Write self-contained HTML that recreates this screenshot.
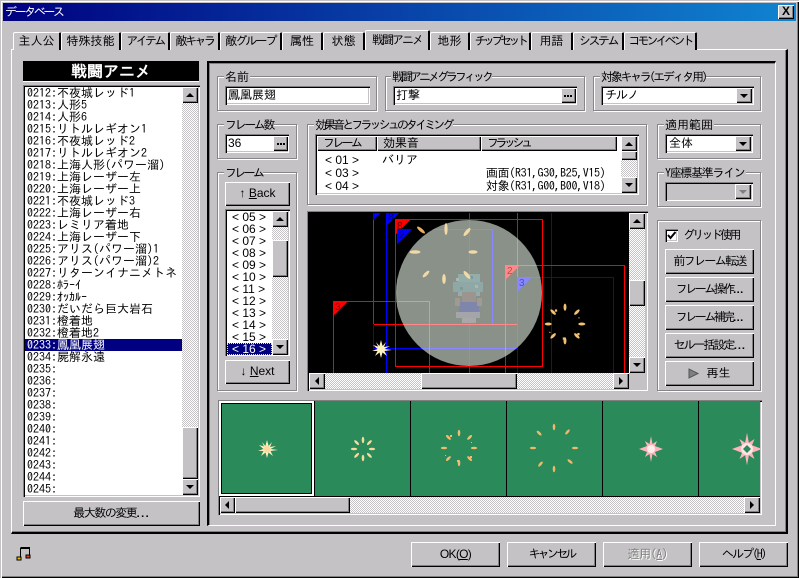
<!DOCTYPE html>
<html lang="ja"><head><meta charset="utf-8"><title>データベース</title>
<style>
html,body{margin:0;padding:0;background:#c4c2c5}
#w{position:relative;width:799px;height:578px;overflow:hidden;background:#c4c2c5;font:12px/12px "IPAGothic","WenQuanYi Zen Hei","Noto Sans CJK JP",sans-serif;color:#000;box-shadow:inset 1px 1px 0 #c4c2c5,inset 2px 2px 0 #fff,inset -1px -1px 0 #000,inset -2px -2px 0 #808080}
#w div,#w span.a{position:absolute;box-sizing:border-box}
.t{white-space:pre}
.tab{top:32px;height:18px;background:#c4c2c5;border-top:1px solid #fff;border-left:1px solid #fff;border-right:2px solid #000;border-radius:2px 2px 0 0;text-align:center;line-height:17px;white-space:pre}
.btn{background:#c4c2c5;box-shadow:inset 1px 1px 0 #fff,inset -1px -1px 0 #000,inset -2px -2px 0 #808080;text-align:center;white-space:pre}
.sb{background:#c4c2c5;box-shadow:inset 1px 1px 0 #fff,inset -1px -1px 0 #000,inset -2px -2px 0 #808080}
.sunk{background:#fff;box-shadow:inset 1px 1px 0 #808080,inset 2px 2px 0 #000,inset -1px -1px 0 #fff,inset -2px -2px 0 #c4c2c5}
.grp{border:1px solid #87858a;box-shadow:inset 1px 1px 0 #fff,1px 1px 0 #fff}
.lg{background:#c4c2c5;padding:0 1px;white-space:pre;height:12px;line-height:12px}
.tr{background:repeating-conic-gradient(#c4c2c5 0 25%,#fff 0 50%) 0 0/2px 2px}
.ar{width:0;height:0;border-style:solid;border-color:transparent}
.up{border-width:0 4px 4px 4px;border-bottom-color:#000}
.dn{border-width:4px 4px 0 4px;border-top-color:#000}
.lf{border-width:4px 4px 4px 0;border-right-color:#000}
.rt{border-width:4px 0 4px 4px;border-left-color:#000}
.row{left:27px;width:155px;height:12px;line-height:12px;white-space:pre}
.fr{left:232px;height:12px;line-height:12px;white-space:pre;width:40px;font-family:"Liberation Sans",sans-serif;font-size:12px}
.nm{font-family:"Liberation Sans",sans-serif;white-space:pre}
u{text-decoration:underline}
</style></head><body>
<div id="w">
<!-- title -->
<div style="left:3px;top:3px;width:793px;height:18px;background:linear-gradient(90deg,#000080,#1084d0)"></div>
<div class="t" style="left:5px;top:6px;color:#fff;letter-spacing:-2.4px">データベース</div>
<div class="btn" style="left:778px;top:5px;width:16px;height:14px;line-height:13px;font:bold 12px/13px 'Liberation Sans',sans-serif">X</div>

<!-- tab page -->
<div style="left:11px;top:49px;width:777px;height:485px;border-top:1px solid #fff;border-left:1px solid #fff;border-right:2px solid #000;border-bottom:2px solid #000;box-shadow:inset -1px -1px 0 #808080"></div>
<div class="tab" style="left:13px;width:48px">主人公</div>
<div class="tab" style="left:61px;width:60px">特殊技能</div>
<div class="tab" style="left:121px;width:49px;letter-spacing:-2.7px">アイテム</div>
<div class="tab" style="left:170px;width:50px;letter-spacing:-2.5px">敵キャラ</div>
<div class="tab" style="left:220px;width:62px;letter-spacing:-1.9px">敵グループ</div>
<div class="tab" style="left:282px;width:41px">属性</div>
<div class="tab" style="left:323px;width:42px">状態</div>
<div class="tab" style="left:365px;top:30px;width:65px;height:20px;letter-spacing:-2px;line-height:19px">戦闘アニメ</div>
<div style="left:366px;top:49px;width:62px;height:2px;background:#c4c2c5"></div>
<div class="tab" style="left:430px;width:40px">地形</div>
<div class="tab" style="left:470px;width:61px;letter-spacing:-3.5px">チップセット</div>
<div class="tab" style="left:531px;width:42px">用語</div>
<div class="tab" style="left:573px;width:51px;letter-spacing:-2.5px">システム</div>
<div class="tab" style="left:624px;width:73px;letter-spacing:-3px">コモンイベント</div>

<!-- left panel -->
<div style="left:23px;top:61px;width:176px;height:21px;background:#000;border-bottom:1px solid #fff;color:#fff;text-align:center;font-size:16px;line-height:20px;font-weight:bold">戦闘アニメ</div>
<div class="sunk" style="left:23px;top:85px;width:177px;height:412px"></div>
<div class="row" style="top:87px">0212:不夜城レッド1</div>
<div class="row" style="top:99px">0213:人形5</div>
<div class="row" style="top:111px">0214:人形6</div>
<div class="row" style="top:123px">0215:リトルレギオン1</div>
<div class="row" style="top:135px">0216:不夜城レッド2</div>
<div class="row" style="top:147px">0217:リトルレギオン2</div>
<div class="row" style="top:159px">0218:上海人形(パワー溜)</div>
<div class="row" style="top:171px">0219:上海レーザー左</div>
<div class="row" style="top:183px">0220:上海レーザー上</div>
<div class="row" style="top:195px">0221:不夜城レッド3</div>
<div class="row" style="top:207px">0222:上海レーザー右</div>
<div class="row" style="top:219px">0223:レミリア着地</div>
<div class="row" style="top:231px">0224:上海レーザー下</div>
<div class="row" style="top:243px">0225:アリス(パワー溜)1</div>
<div class="row" style="top:255px">0226:アリス(パワー溜)2</div>
<div class="row" style="top:267px">0227:リターンイナニメトネ</div>
<div class="row" style="top:279px">0228:ﾎﾗｰｲ</div>
<div class="row" style="top:291px">0229:ｵｯｶﾙｰ</div>
<div class="row" style="top:303px">0230:だいだら巨大岩石</div>
<div class="row" style="top:315px">0231:橙着地</div>
<div class="row" style="top:327px">0232:橙着地2</div>
<div style="left:25px;top:339px;width:157px;height:12px;background:#000080"></div>
<div class="row" style="top:339px;color:#fff">0233:鳳凰展翅</div>
<div class="row" style="top:351px">0234:屍解永遠</div>
<div class="row" style="top:363px">0235:</div>
<div class="row" style="top:375px">0236:</div>
<div class="row" style="top:387px">0237:</div>
<div class="row" style="top:399px">0238:</div>
<div class="row" style="top:411px">0239:</div>
<div class="row" style="top:423px">0240:</div>
<div class="row" style="top:435px">0241:</div>
<div class="row" style="top:447px">0242:</div>
<div class="row" style="top:459px">0243:</div>
<div class="row" style="top:471px">0244:</div>
<div class="row" style="top:483px">0245:</div>
<div class="tr" style="left:182px;top:87px;width:16px;height:408px"></div>
<div class="sb" style="left:182px;top:87px;width:16px;height:16px"></div>
<div class="ar up" style="left:186px;top:93px"></div>
<div class="sb" style="left:182px;top:427px;width:16px;height:52px"></div>
<div class="sb" style="left:182px;top:479px;width:16px;height:16px"></div>
<div class="ar dn" style="left:186px;top:485px"></div>
<div class="btn" style="left:23px;top:501px;width:177px;height:25px;line-height:24px;letter-spacing:-1.5px">最大数の変更...</div>

<!-- right panel -->
<div style="left:207px;top:61px;width:569px;height:465px;border-top:2px solid #000;border-left:2px solid #000;border-right:1px solid #fff;border-bottom:1px solid #fff;box-shadow:inset 1px 1px 0 #808080"></div>

<!-- 名前 -->
<div class="grp" style="left:217px;top:76px;width:160px;height:35px"></div>
<div class="lg" style="left:224px;top:71px">名前</div>
<div class="sunk" style="left:225px;top:86px;width:145px;height:19px"></div>
<div class="t" style="left:228px;top:89px">鳳凰展翅</div>

<!-- グラフィック -->
<div class="grp" style="left:385px;top:76px;width:200px;height:35px"></div>
<div class="lg" style="left:391px;top:71px;letter-spacing:-3px">戦闘アニメグラフィック</div>
<div class="sunk" style="left:393px;top:86px;width:184px;height:19px"></div>
<div class="t" style="left:396px;top:89px">打撃</div>
<div class="btn" style="left:561px;top:88px;width:15px;height:15px"></div>

<!-- 対象キャラ -->
<div class="grp" style="left:593px;top:76px;width:168px;height:35px"></div>
<div class="lg" style="left:600px;top:71px;letter-spacing:-2.3px">対象キャラ(エディタ用)</div>
<div class="sunk" style="left:601px;top:86px;width:153px;height:19px"></div>
<div class="t" style="left:605px;top:89px;letter-spacing:-1px">チルノ</div>
<div class="sb" style="left:736px;top:88px;width:16px;height:15px"></div>
<div class="ar dn" style="left:740px;top:94px"></div>

<!-- フレーム数 -->
<div class="grp" style="left:217px;top:124px;width:80px;height:35px"></div>
<div class="lg" style="left:224px;top:119px;letter-spacing:-2.4px">フレーム数</div>
<div class="sunk" style="left:225px;top:134px;width:64px;height:19px"></div>
<div class="nm" style="left:228px;top:137px">36</div>
<div class="btn" style="left:273px;top:136px;width:15px;height:15px"></div>

<!-- 効果音 -->
<div class="grp" style="left:307px;top:124px;width:340px;height:81px"></div>
<div class="lg" style="left:314px;top:119px;letter-spacing:-2.9px">効果音とフラッシュのタイミング</div>
<div class="sunk" style="left:315px;top:134px;width:324px;height:61px"></div>
<div class="btn" style="left:317px;top:136px;width:60px;height:15px;text-align:left;padding-left:6px;line-height:15px;letter-spacing:-2.7px">フレーム</div>
<div class="btn" style="left:377px;top:136px;width:104px;height:15px;text-align:left;padding-left:6px;line-height:15px">効果音</div>
<div class="btn" style="left:481px;top:136px;width:136px;height:15px;text-align:left;padding-left:6px;line-height:15px;letter-spacing:-3.5px">フラッシュ</div>
<div class="nm" style="left:325px;top:154px">&lt; 01 &gt;</div>
<div class="t" style="left:382px;top:154px">バリア</div>
<div class="nm" style="left:325px;top:167px">&lt; 03 &gt;</div>
<div class="t" style="left:486px;top:167px;letter-spacing:-.35px">画面(R31,G30,B25,V15)</div>
<div class="nm" style="left:325px;top:180px">&lt; 04 &gt;</div>
<div class="t" style="left:486px;top:180px;letter-spacing:-.35px">対象(R31,G00,B00,V18)</div>
<div class="tr" style="left:621px;top:136px;width:16px;height:57px"></div>
<div class="sb" style="left:621px;top:136px;width:16px;height:15px"></div>
<div class="ar up" style="left:625px;top:142px"></div>
<div class="sb" style="left:621px;top:151px;width:16px;height:9px"></div>
<div class="sb" style="left:621px;top:177px;width:16px;height:16px"></div>
<div class="ar dn" style="left:625px;top:183px"></div>

<!-- 適用範囲 -->
<div class="grp" style="left:657px;top:124px;width:104px;height:35px"></div>
<div class="lg" style="left:664px;top:119px">適用範囲</div>
<div class="sunk" style="left:665px;top:134px;width:88px;height:19px"></div>
<div class="t" style="left:669px;top:137px">全体</div>
<div class="sb" style="left:735px;top:136px;width:16px;height:15px"></div>
<div class="ar dn" style="left:739px;top:142px"></div>

<!-- Y座標 -->
<div class="grp" style="left:657px;top:172px;width:104px;height:35px"></div>
<div class="lg" style="left:664px;top:167px;letter-spacing:-1.3px">Y座標基準ライン</div>
<div class="sunk" style="left:665px;top:182px;width:88px;height:19px;background:#c4c2c5"></div>
<div class="sb" style="left:735px;top:184px;width:16px;height:15px"></div>
<div class="ar dn" style="left:739px;top:190px;border-top-color:#808080"></div>

<!-- フレーム -->
<div class="grp" style="left:217px;top:172px;width:80px;height:219px"></div>
<div class="lg" style="left:224px;top:167px;letter-spacing:-2.7px">フレーム</div>
<div class="btn" style="left:225px;top:182px;width:65px;height:24px;line-height:23px;font-family:'Liberation Sans','IPAGothic',sans-serif">↑ <u>B</u>ack</div>
<div class="sunk" style="left:225px;top:209px;width:65px;height:147px"></div>
<div class="fr" style="top:211px">&lt; 05 &gt;</div>
<div class="fr" style="top:223px">&lt; 06 &gt;</div>
<div class="fr" style="top:235px">&lt; 07 &gt;</div>
<div class="fr" style="top:247px">&lt; 08 &gt;</div>
<div class="fr" style="top:259px">&lt; 09 &gt;</div>
<div class="fr" style="top:271px">&lt; 10 &gt;</div>
<div class="fr" style="top:283px">&lt; 11 &gt;</div>
<div class="fr" style="top:295px">&lt; 12 &gt;</div>
<div class="fr" style="top:307px">&lt; 13 &gt;</div>
<div class="fr" style="top:319px">&lt; 14 &gt;</div>
<div class="fr" style="top:331px">&lt; 15 &gt;</div>
<div style="left:227px;top:343px;width:45px;height:12px;background:#000080;outline:1px dotted #ff0;outline-offset:-1px"></div>
<div class="fr" style="top:343px;color:#fff">&lt; 16 &gt;</div>
<div class="tr" style="left:272px;top:211px;width:16px;height:144px"></div>
<div class="sb" style="left:272px;top:211px;width:16px;height:16px"></div>
<div class="ar up" style="left:276px;top:217px"></div>
<div class="sb" style="left:272px;top:240px;width:16px;height:37px"></div>
<div class="sb" style="left:272px;top:339px;width:16px;height:16px"></div>
<div class="ar dn" style="left:276px;top:345px"></div>
<div class="btn" style="left:225px;top:360px;width:65px;height:24px;line-height:23px;font-family:'Liberation Sans','IPAGothic',sans-serif">↓ <u>N</u>ext</div>

<!-- canvas frame -->
<div class="sunk" style="left:307px;top:211px;width:341px;height:180px;background:#c4c2c5"></div>
<div class="tr" style="left:629px;top:213px;width:16px;height:160px"></div>
<div class="sb" style="left:629px;top:213px;width:16px;height:16px"></div>
<div class="ar up" style="left:633px;top:219px"></div>
<div class="sb" style="left:629px;top:280px;width:16px;height:26px"></div>
<div class="sb" style="left:629px;top:357px;width:16px;height:16px"></div>
<div class="ar dn" style="left:633px;top:363px"></div>
<div class="tr" style="left:309px;top:373px;width:320px;height:16px"></div>
<div class="sb" style="left:309px;top:373px;width:16px;height:16px"></div>
<div class="ar lf" style="left:315px;top:377px"></div>
<div class="sb" style="left:421px;top:373px;width:96px;height:16px"></div>
<div class="sb" style="left:613px;top:373px;width:16px;height:16px"></div>
<div class="ar rt" style="left:619px;top:377px"></div>

<!-- right buttons -->
<div class="grp" style="left:657px;top:220px;width:104px;height:171px"></div>
<div class="sunk" style="left:665px;top:229px;width:13px;height:13px"></div>
<div class="t" style="left:683px;top:229px;letter-spacing:-2.7px">グリッド使用</div>
<div class="btn" style="left:665px;top:249px;width:89px;height:25px;line-height:24px;letter-spacing:-1.7px">前フレーム転送</div>
<div class="btn" style="left:665px;top:277px;width:89px;height:25px;line-height:24px;letter-spacing:-2.5px">フレーム操作...</div>
<div class="btn" style="left:665px;top:305px;width:89px;height:25px;line-height:24px;letter-spacing:-2.5px">フレーム補完...</div>
<div class="btn" style="left:665px;top:333px;width:89px;height:25px;line-height:24px;letter-spacing:-2px">セル一括設定...</div>
<div class="btn" style="left:665px;top:361px;width:89px;height:25px;line-height:24px">　 再生</div>

<!-- film strip -->
<div class="sunk" style="left:218px;top:400px;width:544px;height:115px;background:#c4c2c5"></div>
<div style="left:220px;top:401px;width:540px;height:96px;background:#2a8a5a"></div>
<div style="left:220px;top:496px;width:540px;height:1px;background:#000"></div>
<div style="left:314px;top:401px;width:1px;height:95px;background:#000"></div>
<div style="left:410px;top:401px;width:1px;height:95px;background:#000"></div>
<div style="left:506px;top:401px;width:1px;height:95px;background:#000"></div>
<div style="left:602px;top:401px;width:1px;height:95px;background:#000"></div>
<div style="left:698px;top:401px;width:1px;height:95px;background:#000"></div>
<div style="left:219px;top:401px;width:95px;height:95px;border:2px solid #fff;box-shadow:inset 0 0 0 1px #000"></div>
<div class="tr" style="left:220px;top:497px;width:540px;height:16px"></div>
<div class="sb" style="left:220px;top:497px;width:15px;height:16px"></div>
<div class="ar lf" style="left:225px;top:501px"></div>
<div class="sb" style="left:235px;top:497px;width:115px;height:16px"></div>
<div class="sb" style="left:744px;top:497px;width:16px;height:16px"></div>
<div class="ar rt" style="left:750px;top:501px"></div>

<!-- bottom buttons -->
<div class="btn" style="left:411px;top:542px;width:89px;height:25px;line-height:24px;letter-spacing:-.7px;font-family:'Liberation Sans','IPAGothic',sans-serif">OK(<u>O</u>)</div>
<div class="btn" style="left:507px;top:542px;width:89px;height:25px;line-height:24px;letter-spacing:-2.8px">キャンセル</div>
<div class="btn" style="left:603px;top:542px;width:89px;height:25px;line-height:24px;color:#808080;text-shadow:1px 1px 0 #fff;letter-spacing:-.4px">適用(<u>A</u>)</div>
<div class="btn" style="left:699px;top:542px;width:89px;height:25px;line-height:24px;letter-spacing:-1.8px">ヘルプ(<u>H</u>)</div>

<!-- graphics overlay -->
<svg width="799" height="578" viewBox="0 0 799 578" style="position:absolute;left:0;top:0">
<defs>
<clipPath id="cv"><rect x="309" y="213" width="320" height="160"/></clipPath>
<clipPath id="cc"><circle cx="469" cy="293" r="73"/></clipPath>
<clipPath id="fc"><rect x="220" y="401" width="540" height="95"/></clipPath>
<polygon id="star" points="0,-9 1.6,-3 5,-7 3,-2 9,-3 3.5,0 11,1 3.5,2 6,7 1.5,3.5 0,9 -1.5,3.5 -6,7 -3.5,2 -9,2 -3.5,0 -8,-4 -3,-2.5 -5,-7 -1.6,-3"/>
<polygon id="bigstar" points="0,-13 1.5,-5 6,-8 4,-3 12,0 4,3 6,8 1.5,5 0,13 -1.5,5 -6,8 -4,3 -12,0 -4,-3 -6,-8 -1.5,-5"/>
<ellipse id="f" cx="0" cy="0" rx="1.3" ry="3.2"/>
<g id="ring10"><use href="#f" y="-9" transform="rotate(0)"/><use href="#f" y="-9" transform="rotate(45)"/><use href="#f" y="-9" transform="rotate(90)"/><use href="#f" y="-9" transform="rotate(135)"/><use href="#f" y="-9" transform="rotate(180)"/><use href="#f" y="-9" transform="rotate(225)"/><use href="#f" y="-9" transform="rotate(270)"/><use href="#f" y="-9" transform="rotate(315)"/></g>
<g id="ring16"><use href="#f" y="-15" transform="rotate(0)"/><use href="#f" y="-15" transform="rotate(45)"/><use href="#f" y="-15" transform="rotate(90)"/><use href="#f" y="-15" transform="rotate(135)"/><use href="#f" y="-15" transform="rotate(180)"/><use href="#f" y="-15" transform="rotate(225)"/><use href="#f" y="-15" transform="rotate(270)"/><use href="#f" y="-15" transform="rotate(315)"/><rect x="-9" y="-13" width="2" height="2"/><rect x="11" y="8" width="2" height="2"/><rect x="-2" y="12" width="2" height="2"/><rect x="12" y="-6" width="1" height="1"/><rect x="-14" y="7" width="1" height="1"/></g>
<g id="ring22"><use href="#f" y="-21" transform="rotate(0)"/><use href="#f" y="-21" transform="rotate(40)"/><use href="#f" y="-21" transform="rotate(90)"/><use href="#f" y="-21" transform="rotate(130)"/><use href="#f" y="-21" transform="rotate(180)"/><use href="#f" y="-21" transform="rotate(220)"/><use href="#f" y="-21" transform="rotate(270)"/><use href="#f" y="-21" transform="rotate(315)"/></g>
</defs>

<!-- ellipsis buttons -->
<g fill="#000" shape-rendering="crispEdges">
<rect x="564" y="95" width="2" height="2"/><rect x="567" y="95" width="2" height="2"/><rect x="570" y="95" width="2" height="2"/>
<rect x="277" y="143" width="2" height="2"/><rect x="280" y="143" width="2" height="2"/><rect x="283" y="143" width="2" height="2"/>
</g>

<!-- canvas -->
<rect x="309" y="213" width="320" height="160" fill="#000"/>
<g clip-path="url(#cv)" shape-rendering="crispEdges" fill="none" font-family="Liberation Sans,sans-serif" font-size="10">
<line x1="386.5" y1="213" x2="386.5" y2="373" stroke="#0000ff"/>
<line x1="551.5" y1="213" x2="551.5" y2="373" stroke="#0000ff"/>
<line x1="469.5" y1="213" x2="469.5" y2="373" stroke="#0a6a1a"/>
<path d="M373.5 213V324.5H517.5V213" stroke="#ff0000"/>
<path d="M373.5 324V348.5H517.5V324" stroke="#0000ff"/>
<path d="M333.5 373V301.5H429.5V373" stroke="#ff0000"/>
<path d="M505.5 373V265.5H624.5V373" stroke="#ff0000"/>
<path d="M517.5 373V277.5H613.5V373" stroke="#0000ff"/>
<circle cx="469" cy="293" r="73" fill="#8a9188" shape-rendering="auto"/>
<g clip-path="url(#cc)">
<line x1="469.5" y1="213" x2="469.5" y2="373" stroke="#7aa87a"/>
<line x1="386.5" y1="213" x2="386.5" y2="373" stroke="#8888ff"/>
<path d="M373.5 213V324.5H517.5V213" stroke="#ff8888"/>
<path d="M373.5 324V348.5H517.5V324" stroke="#8888ff"/>
<path d="M333.5 373V301.5H429.5V373" stroke="#ff8888"/>
<path d="M505.5 373V265.5H624.5V373" stroke="#ff8888"/>
<path d="M517.5 373V277.5H613.5V373" stroke="#8888ff"/>
<path d="M397.5 229.5H492.5V324" stroke="#8888ff"/>
<path d="M397.5 229.5V324" stroke="#8888ff"/>
</g>
<rect x="395.5" y="219.5" width="147" height="147" stroke="#ff0000"/>
<!-- flags -->
<polygon points="373,213 381,213 373,220" fill="#0000ff"/>
<polygon points="386,213 399,213 386,226" fill="#0000ff"/>
<text x="388" y="220" fill="#000060">8</text>
<polygon points="395,219 411,219 395,235" fill="#ff0000"/>
<text x="397" y="229" fill="#600000">8</text>
<polygon points="397,229 412,229 397,244" fill="#0000ff"/>
<text x="399" y="238" fill="#000060">2</text>
<polygon points="333,301 348,301 333,316" fill="#ff0000"/>
<text x="335" y="310" fill="#800000">3</text>
<polygon points="505,265 520,265 505,280" fill="#ff8888"/>
<text x="507" y="274" fill="#b05050">2</text>
<polygon points="517,277 532,277 517,292" fill="#8888ff"/>
<text x="519" y="286" fill="#5050c0">3</text>
</g>
<!-- sprite -->
<g shape-rendering="crispEdges">
<rect x="458" y="274" width="22" height="22" fill="#93aeaa"/>
<rect x="453" y="282" width="30" height="10" fill="#8fa8a6"/>
<rect x="456" y="278" width="3" height="3" fill="#aab6b0"/>
<rect x="470" y="276" width="3" height="3" fill="#7c9a96"/>
<rect x="475" y="285" width="3" height="3" fill="#aab6b0"/>
<rect x="460" y="287" width="3" height="3" fill="#7c9a96"/>
<rect x="462" y="292" width="14" height="10" fill="#9c958f"/>
<rect x="459" y="302" width="20" height="12" fill="#7f86ac"/>
<rect x="456" y="312" width="24" height="6" fill="#a3a5a8"/>
<rect x="462" y="318" width="14" height="5" fill="#a8a8a8"/>
<rect x="455" y="298" width="5" height="8" fill="#a09a92"/>
<rect x="477" y="298" width="5" height="8" fill="#a09a92"/>
</g>
<!-- canvas effects -->
<g fill="#f2d9a8">
<ellipse cx="421" cy="230" rx="1.6" ry="5" transform="rotate(-50 421 230)" fill="#e8b060"/>
<ellipse cx="446" cy="229" rx="1.6" ry="6"/>
<ellipse cx="467" cy="232" rx="1.8" ry="5" transform="rotate(40 467 232)"/>
<ellipse cx="415" cy="252" rx="5.5" ry="1.8"/>
<ellipse cx="473" cy="252" rx="4.5" ry="1.8"/>
<ellipse cx="426" cy="274" rx="1.6" ry="4.5" transform="rotate(45 426 274)"/>
<ellipse cx="444" cy="279" rx="1.8" ry="5"/>
<ellipse cx="467" cy="275" rx="1.8" ry="5" transform="rotate(-40 467 275)"/>
</g>
<use href="#ring16" transform="translate(565,324) scale(1.12)" fill="#f2c070"/>
<use href="#star" transform="translate(381,349)" fill="#fff0c0"/>
<!-- film effects -->
<g clip-path="url(#fc)">
<use href="#star" transform="translate(267,449)" fill="#fff0c0"/>
<circle cx="267" cy="449" r="3.5" fill="#ffd8a0"/>
<use href="#ring10" transform="translate(363,449)" fill="#f6dba0"/>
<use href="#ring16" transform="translate(459,448)" fill="#f2bb70"/>
<use href="#ring22" transform="translate(554,448)" fill="#f0b868"/>
<use href="#bigstar" transform="translate(651,449)" fill="#ffb4bc"/>
<circle cx="651" cy="449" r="4" fill="#ffecec"/>
<use href="#bigstar" transform="translate(747,449) scale(1.25)" fill="#ffb4bc"/>
<circle cx="747" cy="449" r="6" fill="#ffe4e4"/>
<polygon points="747,445 751,449 747,453 743,449" fill="#2a8a5a"/>
</g>
<!-- check -->
<path d="M668 235l2.5 3 5-6" stroke="#000" stroke-width="2" fill="none"/>
<!-- play -->
<polygon points="689,369 689,378 698,373.5" fill="#808080" stroke="#555"/>
<!-- music -->
<g fill="none" shape-rendering="crispEdges">
<path d="M20.5 557V548H29.5V556" stroke="#000"/>
<rect x="21" y="547" width="9" height="2" fill="#000"/>
<rect x="17" y="557" width="4" height="3" fill="#f0c000" stroke="#000" stroke-width=".6"/>
<rect x="26" y="555" width="4" height="3" fill="#e04020" stroke="#000" stroke-width=".6"/>
</g>
</svg>
</div>
</body></html>
